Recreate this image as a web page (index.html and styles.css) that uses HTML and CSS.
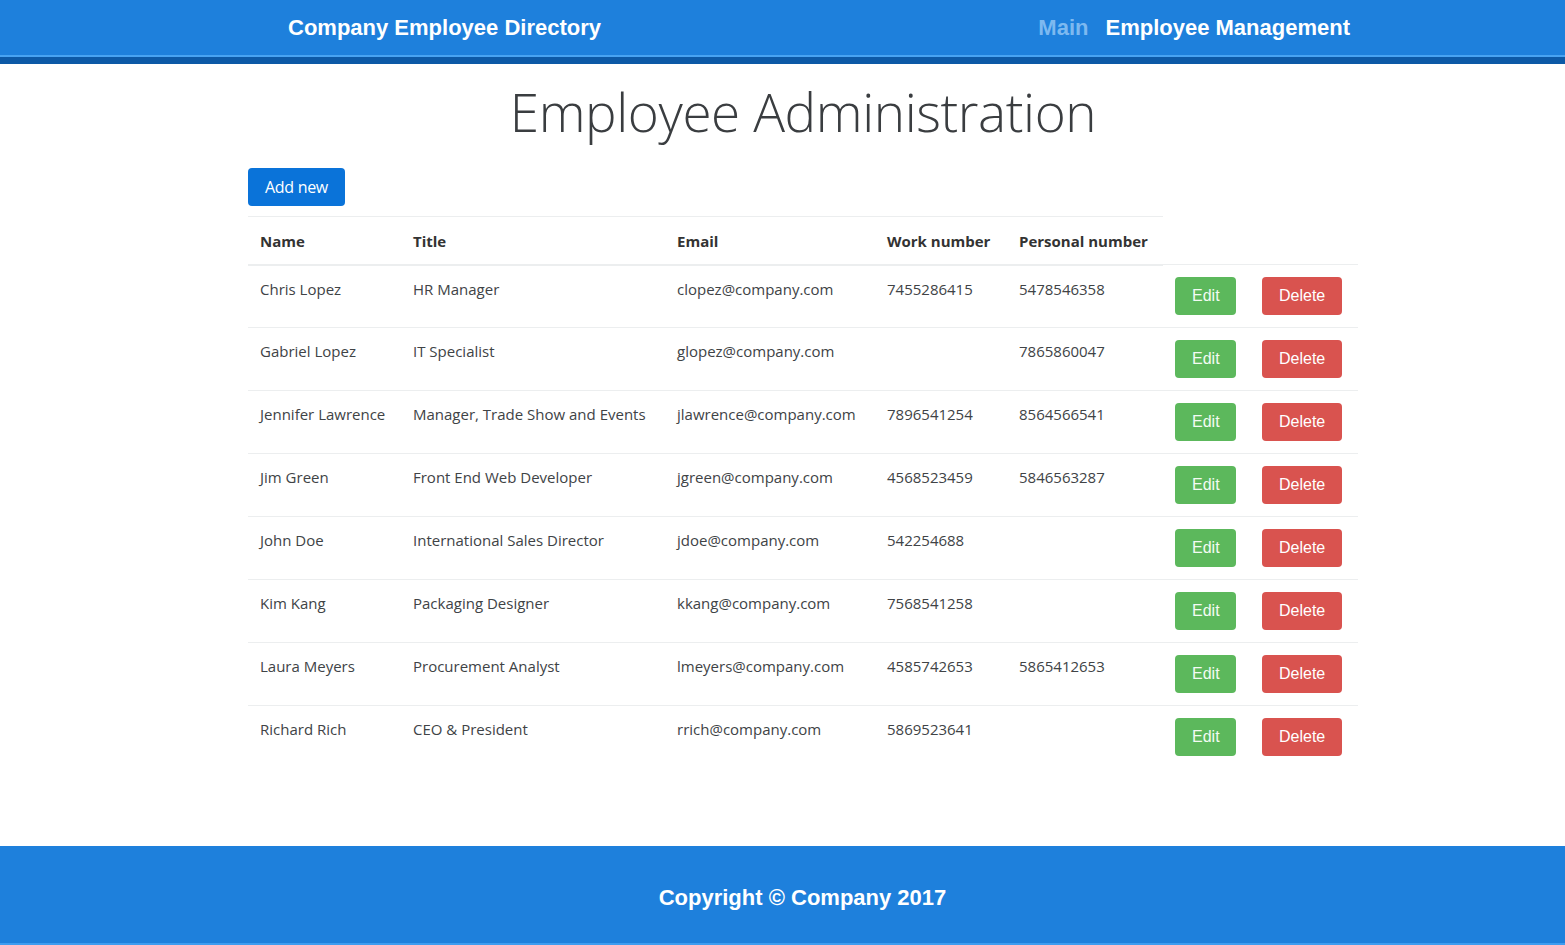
FILE: index.html
```html
<!DOCTYPE html>
<html lang="en">
<head>
<meta charset="utf-8">
<title>Employee Administration</title>
<link rel="stylesheet" href="styles.css">
</head>
<body>
<header class="topbar">
  <div class="topbar-inner">
    <div class="brand">Company Employee Directory</div>
    <nav class="nav">
      <a class="nav-link muted" href="#">Main</a>
      <a class="nav-link active" href="#">Employee Management</a>
    </nav>
  </div>
</header>
<main class="container">
  <h1 class="page-title">Employee Administration</h1>
  <button class="btn btn-primary">Add new</button>
  <table class="table">
    <colgroup>
      <col class="c-name"><col class="c-title"><col class="c-email"><col class="c-work"><col class="c-personal"><col class="c-edit"><col class="c-del">
    </colgroup>
    <thead>
      <tr><th>Name</th><th>Title</th><th>Email</th><th>Work number</th><th>Personal number</th></tr>
    </thead>
    <tbody>
      <tr><td>Chris Lopez</td><td>HR Manager</td><td>clopez@company.com</td><td>7455286415</td><td>5478546358</td><td><button class="btn btn-success">Edit</button></td><td><button class="btn btn-danger">Delete</button></td></tr>
      <tr><td>Gabriel Lopez</td><td>IT Specialist</td><td>glopez@company.com</td><td></td><td>7865860047</td><td><button class="btn btn-success">Edit</button></td><td><button class="btn btn-danger">Delete</button></td></tr>
      <tr><td>Jennifer Lawrence</td><td>Manager, Trade Show and Events</td><td>jlawrence@company.com</td><td>7896541254</td><td>8564566541</td><td><button class="btn btn-success">Edit</button></td><td><button class="btn btn-danger">Delete</button></td></tr>
      <tr><td>Jim Green</td><td>Front End Web Developer</td><td>jgreen@company.com</td><td>4568523459</td><td>5846563287</td><td><button class="btn btn-success">Edit</button></td><td><button class="btn btn-danger">Delete</button></td></tr>
      <tr><td>John Doe</td><td>International Sales Director</td><td>jdoe@company.com</td><td>542254688</td><td></td><td><button class="btn btn-success">Edit</button></td><td><button class="btn btn-danger">Delete</button></td></tr>
      <tr><td>Kim Kang</td><td>Packaging Designer</td><td>kkang@company.com</td><td>7568541258</td><td></td><td><button class="btn btn-success">Edit</button></td><td><button class="btn btn-danger">Delete</button></td></tr>
      <tr><td>Laura Meyers</td><td>Procurement Analyst</td><td>lmeyers@company.com</td><td>4585742653</td><td>5865412653</td><td><button class="btn btn-success">Edit</button></td><td><button class="btn btn-danger">Delete</button></td></tr>
      <tr><td>Richard Rich</td><td>CEO &amp; President</td><td>rrich@company.com</td><td>5869523641</td><td></td><td><button class="btn btn-success">Edit</button></td><td><button class="btn btn-danger">Delete</button></td></tr>
    </tbody>
  </table>
</main>
<footer class="footer">
  <p class="copyright">Copyright © Company 2017</p>
</footer>
</body>
</html>
```
FILE: styles.css
```css
* { box-sizing: border-box; }
html, body { margin: 0; padding: 0; }
body {
  font-family: "Open Sans", "Noto Sans", sans-serif;
  font-size: 16px;
  color: #404346;
  background: #fff;
}
.topbar {
  background: #1e80dc;
  border-bottom: 7px solid #0d59a6;
}
.topbar-inner {
  height: 57px;
  display: flex;
  align-items: center;
  justify-content: space-between;
  padding: 0 215px 2px 288px;
  box-shadow: inset 0 -2px 0 #48a3f2;
  font-family: "Liberation Sans", Arial, sans-serif;
  font-weight: bold;
  font-size: 22px;
  color: #fff;
}
.nav { display: flex; gap: 17px; }
.nav-link { text-decoration: none; color: #fff; }
.nav-link.muted { color: #7db9f0; }
.container {
  width: 1110px;
  margin-left: 248px;
  padding-bottom: 77px;
}
.page-title {
  margin: 16px 0 24px;
  text-align: center;
  font-size: 53px;
  font-weight: 300;
  line-height: 1.2;
  color: #3a3d40;
  letter-spacing: -0.4px;
}
.btn {
  display: inline-block;
  border: 0;
  border-radius: 4px;
  padding: 0 16px;
  height: 38px;
  font-size: 16px;
  line-height: 38px;
  color: #fff;
  cursor: pointer;
  vertical-align: top;
}
.btn-primary {
  background: #0a73d9;
  font-family: "Open Sans", "Noto Sans", sans-serif;
  margin-bottom: 10px;
  padding: 0 17px;
  letter-spacing: -0.3px;
}
.btn-success {
  background: #5cb85c;
  font-family: "Liberation Sans", Arial, sans-serif;
  color: #f3fbf3;
  padding: 0 16px 0 17px;
}
.btn-danger {
  background: #d9534f;
  font-family: "Liberation Sans", Arial, sans-serif;
  padding: 0 17px;
}
.table {
  border-collapse: collapse;
  table-layout: fixed;
  width: 1110px;
}
.c-name { width: 153px; }
.c-title { width: 264px; }
.c-email { width: 210px; }
.c-work { width: 132px; }
.c-personal { width: 156px; }
.c-edit { width: 87px; }
.c-del { width: 108px; }
.table th, .table td {
  padding: 12px;
  text-align: left;
  vertical-align: top;
  line-height: 24px;
  white-space: nowrap;
  border-top: 1px solid #eceeef;
  font-size: 15px;
}
.table th {
  font-weight: 700;
  color: #333;
  border-bottom: 2px solid #eceeef;
  padding-top: 12px;
  padding-bottom: 11px;
}
.table td { padding-bottom: 12px; height: 63px; }
.table td:not(:nth-child(n+6)) { padding-top: 11px; }
.footer {
  background: #1e80dc;
  border-bottom: 2px solid #3d9cf0;
  height: 99px;
  display: flex;
  align-items: center;
  justify-content: center;
}
.copyright {
  margin: 8px 0 0 40px;
  font-family: "Liberation Sans", Arial, sans-serif;
  font-weight: bold;
  font-size: 22px;
  color: #fff;
}
```
